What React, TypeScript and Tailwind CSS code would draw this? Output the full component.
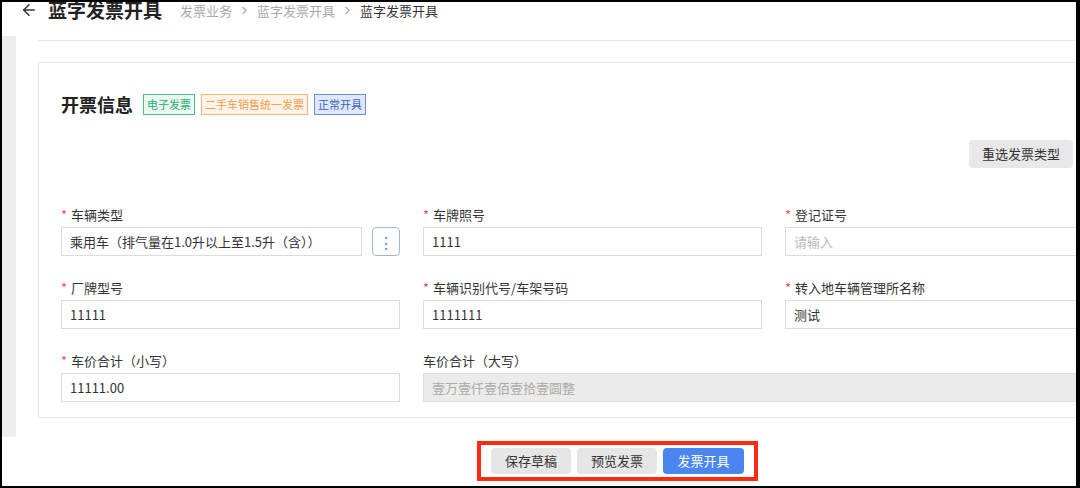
import { ArrowLeft, ChevronRight } from "lucide-react";

const font = { fontFamily: '"Noto Sans CJK SC", "Noto Sans", sans-serif' };

function Field({ label, required = true, value, placeholder, disabled, extra, wide }: { label: string; required?: boolean; value?: string; placeholder?: string; disabled?: boolean; extra?: boolean; wide?: boolean }) {
  return (
    <div className={"flex shrink-0 flex-col " + (wide ? "w-[700px]" : "w-[339px]")}>
      <div className="flex h-[14px] items-center text-[13px] leading-none text-[#333]">
        {required && <span className="mr-1 text-[#e55]">*</span>}
        {label}
      </div>
      <div className="mt-[6px] flex gap-[10px]">
        <div
          className={
            "flex h-[29px] flex-1 items-center border px-2 text-[13px] " +
            (disabled ? "border-[#ddd] bg-[#ebebeb] text-[#aaa]" : "border-[#dcdcdc] bg-white text-[#333]")
          }
        >
          {value ?? <span className="text-[#bbb]">{placeholder}</span>}
        </div>
        {extra && (
          <div className="flex h-[29px] w-[28px] items-center justify-center rounded-sm border border-[#9bb8e8] text-[#4a86f0]">
            ⋮
          </div>
        )}
      </div>
    </div>
  );
}

export default function App() {
  return (
    <div style={font} className="relative h-[488px] w-[1080px] overflow-hidden bg-white">
      <div className="pointer-events-none absolute inset-0 z-10 border-y-2 border-l-2 border-r-4 border-black" />
      {/* header */}
      <div className="flex h-[20px] items-start pl-[20px]">
        <div className="-mt-[4px] flex items-center">
          <ArrowLeft size={18} strokeWidth={2} className="text-[#333]" />
          <span className="ml-[10px] text-[19px] font-bold text-[#222]">蓝字发票开具</span>
          <span className="ml-[18px] flex items-center text-[13px] text-[#aaa]">
            发票业务 <ChevronRight size={13} className="mx-[6px]" /> 蓝字发票开具 <ChevronRight size={13} className="mx-[6px]" />
            <span className="text-[#333]">蓝字发票开具</span>
          </span>
        </div>
      </div>
      <div className="mt-[16px] flex">
        <div className="ml-[2px] h-[401px] w-[14px] shrink-0 bg-[#eeeeee]" />
        <div className="ml-[22px] min-w-0 flex-1">
          <div className="h-[5px] border-b border-[#e6e6e6]" />
          <div className="mt-[21px] h-[356px] overflow-hidden border border-[#e6e6e6] pl-[22px] pr-[6px]">
            <div className="mt-[28px] flex items-center gap-[6px]">
              <span className="mr-[4px] text-[18px] font-bold text-[#222]">开票信息</span>
              <span className="border border-[#4cbf8f] bg-[#eafaf2] px-[3px] py-[1px] text-[11px] text-[#2bab73]">电子发票</span>
              <span className="border border-[#f2b477] bg-[#fdf3e8] px-[3px] py-[1px] text-[11px] text-[#f0a050]">二手车销售统一发票</span>
              <span className="border border-[#6c8fd8] bg-[#dfe7fb] px-[3px] py-[1px] text-[11px] text-[#3d64c0]">正常开具</span>
            </div>
            <div className="mt-[22px] flex justify-end">
              <button className="h-[28px] w-[104px] rounded-sm bg-[#e8e8e8] text-[13px] text-[#333]">重选发票类型</button>
            </div>
            <div className="mt-[39px] flex flex-col gap-[24px]">
              <div className="flex gap-[23px]">
                <Field label="车辆类型" value="乘用车（排气量在1.0升以上至1.5升（含））" extra />
                <Field label="车牌照号" value="1111" />
                <Field label="登记证号" placeholder="请输入" />
              </div>
              <div className="flex gap-[23px]">
                <Field label="厂牌型号" value="11111" />
                <Field label="车辆识别代号/车架号码" value="1111111" />
                <Field label="转入地车辆管理所名称" value="测试" />
              </div>
              <div className="flex gap-[23px]">
                <Field label="车价合计（小写）" value="11111.00" />
                <Field label="车价合计（大写）" required={false} value="壹万壹仟壹佰壹拾壹圆整" disabled wide />
              </div>
            </div>
          </div>
        </div>
      </div>
      <div className="mt-[4px] flex pl-[477px]">
        <div className="flex gap-[6px] border-[4px] border-[#ff2a12] px-[10px] py-[3px]">
          <button className="h-[26px] w-[80px] rounded-sm bg-[#e6e6e6] text-[13px] text-[#333]">保存草稿</button>
          <button className="h-[26px] w-[80px] rounded-sm bg-[#e6e6e6] text-[13px] text-[#333]">预览发票</button>
          <button className="h-[26px] w-[81px] rounded-sm bg-[#4a86f0] text-[13px] text-white">发票开具</button>
        </div>
      </div>
    </div>
  );
}
